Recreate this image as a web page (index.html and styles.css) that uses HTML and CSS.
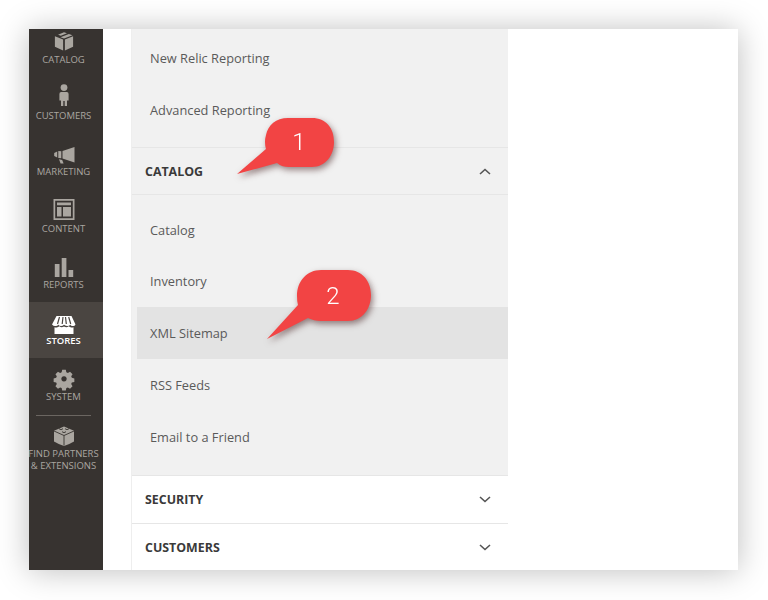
FILE: index.html

```html
<!DOCTYPE html>
<html lang="en">
<head>
    <meta charset="UTF-8" />
    <meta name="viewport" content="width=device-width, initial-scale=1" />
    <title>Stores menu</title>
    <link rel="stylesheet" href="styles.css">
</head>
<body>
    <div class="frame">
        <nav class="sidebar">
            <div class="nav-list">
                <a class="nav-item">
                    <svg class="nav-icon" viewBox="0 0 24 26"><path d="M12 4.200l3 1-6.200 2.600-2.800-1.100zM16.900 5.900l3.600 1.400-8.500 3.300-3.500-1.400zM2.900 8.200l8.200 3.300v10.900l-8.200-3.700zM21.100 8.200v10.500l-8.200 3.700v-10.900z"/></svg>
                    <span>CATALOG</span>
                </a>
                <a class="nav-item">
                    <svg class="nav-icon" viewBox="0 0 24 26"><circle cx="12" cy="3.600" r="3.400"/><path d="M9.200 8h5.600q1.800 0 1.800 2v6.500h-1.600v5.500h-2.300v-5h-1.400v5h-2.300v-5.500h-1.600v-6.500q0-2 1.800-2z"/></svg>
                    <span>CUSTOMERS</span>
                </a>
                <a class="nav-item">
                    <svg class="nav-icon" viewBox="0 0 24 26"><path d="M22.500 7v15.500l-12-4v-7.500zM9.300 11.200v7l-3-.1v-7zM5.200 11.500v6l-3-1.500v-3zM7 19.200l3.200.8 1.400 3.500h-3z"/></svg>
                    <span>MARKETING</span>
                </a>
                <a class="nav-item">
                    <svg class="nav-icon" viewBox="0 0 24 26"><path fill-rule="evenodd" d="M1.500 2h21v21h-21zM3.200 3.700v17.600h17.600v-17.600z"/><path d="M5 5.500h14v2.800h-14zM5 10h4.500v9.500h-4.500zM11 10h8v9.500h-8z"/></svg>
                    <span>CONTENT</span>
                </a>
                <a class="nav-item">
                    <svg class="nav-icon" viewBox="0 0 24 26"><path d="M2.800 11h4.700v13h-4.700zM9.700 5h4.700v19h-4.700zM16.500 17h4.700v7h-4.700z"/></svg>
                    <span>REPORTS</span>
                </a>
                <a class="nav-item nav-item-active">
                    <svg class="nav-icon" viewBox="0 0 24 26"><path d="M4.500 7h15l4 8.500q-1 2-3 1.500-1.600 0-2.300-1.300-.9 1.300-2.600 1.300t-3.600-1.300q-1.200 1.300-3 1.300t-2.700-1.300q-.8 1.300-2.500 1.300-2 .5-3.800-1.500z"/><path d="M2.500 18.200q1.500.5 3 0 1.200-.3 1.800-.9 2.300 1.600 4.700.2 2.500 1.400 4.700-.2 .6.600 1.800.9 1.500.5 3 0v6.800h-19z"/><path class="awning-cut" d="M7.500 8l-2 7M11 8l-.8 7M13.500 8l.8 7M16.700 8l2 7"/></svg>
                    <span>STORES</span>
                </a>
                <a class="nav-item">
                    <svg class="nav-icon" viewBox="0 0 24 26"><path fill-rule="evenodd" d="M10 4.500h4l.6 2.800 1.700.7 2.400-1.500 2.800 2.800-1.500 2.400.7 1.700 2.800.6v4l-2.800.6-.7 1.700 1.500 2.400-2.800 2.800-2.400-1.500-1.700.7-.6 2.800h-4l-.6-2.800-1.700-.7-2.400 1.500-2.800-2.800 1.500-2.400-.7-1.700-2.800-.6v-4l2.800-.6.7-1.700-1.500-2.400 2.800-2.800 2.400 1.500 1.700-.7zM12 11.500a3 3 0 1 0 .01 0z" transform="translate(1.200 .8) scale(.9)"/></svg>
                    <span>SYSTEM</span>
                </a>
                <div class="nav-divider"></div>
                <a class="nav-item nav-item-wide">
                    <svg class="nav-icon" viewBox="0 0 24 26"><path d="M12 5.500l10 4.300v10.700q-5 3-10 4.500-5-1.500-10-4.500v-10.700z"/><path class="lego-cut" d="M2 10l10 4.500 10-4.500M12 14.500v10M7 7.700q2 2 4 0M13 7.700q2 2 4 0M10 10.700q2 2 4 0"/></svg>
                    <span>FIND PARTNERS<br>&amp; EXTENSIONS</span>
                </a>
            </div>
        </nav>

        <div class="panel">
            <div class="menu-list menu-list-top">
                <a class="menu-row">New Relic Reporting</a>
                <a class="menu-row">Advanced Reporting</a>
            </div>
            <div class="menu-head menu-head-open">
                <span>CATALOG</span>
                <svg class="chevron" viewBox="0 0 12 7"><path d="M1 6l5-4.500 5 4.500"/></svg>
            </div>
            <div class="menu-list">
                <a class="menu-row">Catalog</a>
                <a class="menu-row">Inventory</a>
                <a class="menu-row menu-row-active">XML Sitemap</a>
                <a class="menu-row">RSS Feeds</a>
                <a class="menu-row">Email to a Friend</a>
            </div>
            <div class="menu-head">
                <span>SECURITY</span>
                <svg class="chevron" viewBox="0 0 12 7"><path d="M1 1l5 4.500 5-4.500"/></svg>
            </div>
            <div class="menu-head">
                <span>CUSTOMERS</span>
                <svg class="chevron" viewBox="0 0 12 7"><path d="M1 1l5 4.500 5-4.500"/></svg>
            </div>
        </div>

        <!-- numbered callouts on top of the menu -->
        <svg class="callout callout-one" viewBox="0 0 100 64">
            <path d="M31 33q-2-7 0-14c2-10 10-17 22-17h24c14 0 22 10 22 24s-9 25-22 25h-23c-5 0-8-1-12-4l-40 11z"/>
            <text x="64" y="34">1</text>
        </svg>
        <svg class="callout callout-two" viewBox="0 0 108 74">
            <path d="M33 37q-1-3-1-9c0-15 10-26 24-26h27c14 0 23 11 23 25s-9 26-23 26h-27c-5 0-9-1-13-3l-41 21z"/>
            <text x="68" y="36">2</text>
        </svg>
    </div>
</body>
</html>
```

FILE: styles.css

```css
* {
    box-sizing: border-box;
}

body {
    margin: 0;
    padding: 29px 30px 30px 29px;
    background-color: #fff;
    font-family: "Open Sans", sans-serif;
}

.frame {
    position: relative;
    display: flex;
    height: 541px;
    background-color: #fff;
    box-shadow: 0 1px 30px rgba(0, 0, 0, 0.26);
}

/* left dark bar */
.sidebar {
    flex: 0 0 74px;
    height: 100%;
    overflow: hidden;
    background-color: #373330;
}

.nav-list {
    margin-top: -8.3px;
}

.nav-item {
    display: flex;
    flex-direction: column;
    align-items: center;
    height: 56.3px;
    padding: 7px 5px 0 0;
    color: #aaa6a0;
    font-size: 9.5px;
    line-height: 12px;
    text-align: center;
}

.nav-item span {
    white-space: nowrap;
}

.nav-icon {
    display: block;
    width: 24px;
    height: 26px;
    flex: none;
    fill: #aaa6a0;
}

.nav-item-active {
    background-color: #4a4541;
    color: #fff;
    font-weight: 600;
}

.nav-item-active .nav-icon {
    fill: #fff;
}

.awning-cut {
    fill: none;
    stroke: #4a4541;
    stroke-width: 1.2;
}

.lego-cut {
    fill: none;
    stroke: #373330;
    stroke-width: 0.9;
}

.nav-divider {
    width: 55px;
    height: 1px;
    margin: 0 0 -1px 7px;
    background-color: #6b6661;
}

.nav-item-wide {
    height: 70px;
    padding-top: 6px;
}

.nav-item-wide span {
    margin-top: 1px;
}

/* menu column */
.panel {
    flex: 0 0 377px;
    height: 100%;
    margin-left: 28px;
    overflow: hidden;
    background-color: #fff;
    border-left: 1px solid #eee;
}

.menu-list {
    padding: 9px 0 12px 5px;
    background-color: #f1f1f1;
}

.menu-list-top {
    padding-top: 3px;
    padding-bottom: 11px;
}

.menu-row {
    display: block;
    height: 51.8px;
    padding-left: 13px;
    padding-top: 1px;
    color: #5a5a5a;
    font-size: 12.8px;
    line-height: 51.8px;
}

.menu-row-active {
    background-color: #e3e3e3;
}

.menu-head {
    display: flex;
    align-items: center;
    justify-content: space-between;
    height: 48px;
    padding: 1px 17px 0 13px;
    border-top: 1px solid #e6e6e6;
    color: #3a3a3a;
    font-size: 12.4px;
    font-weight: 700;
}

.menu-head-open {
    background-color: #f1f1f1;
    border-bottom: 1px solid #e6e6e6;
}

.chevron {
    width: 12px;
    height: 7px;
    fill: none;
    stroke: #555;
    stroke-width: 1.6;
}

/* red speech bubbles */
.callout {
    position: absolute;
    overflow: visible;
    fill: #f24444;
    filter: drop-shadow(2px 3px 3px rgba(60, 20, 20, 0.5));
}

.callout text {
    fill: #fff;
    font-family: Roboto, sans-serif;
    font-size: 24px;
    font-weight: 300;
    text-anchor: middle;
}

.callout-one {
    left: 206px;
    top: 87px;
    width: 100px;
    height: 64px;
}

.callout-two {
    left: 236px;
    top: 239px;
    width: 108px;
    height: 74px;
}
```
